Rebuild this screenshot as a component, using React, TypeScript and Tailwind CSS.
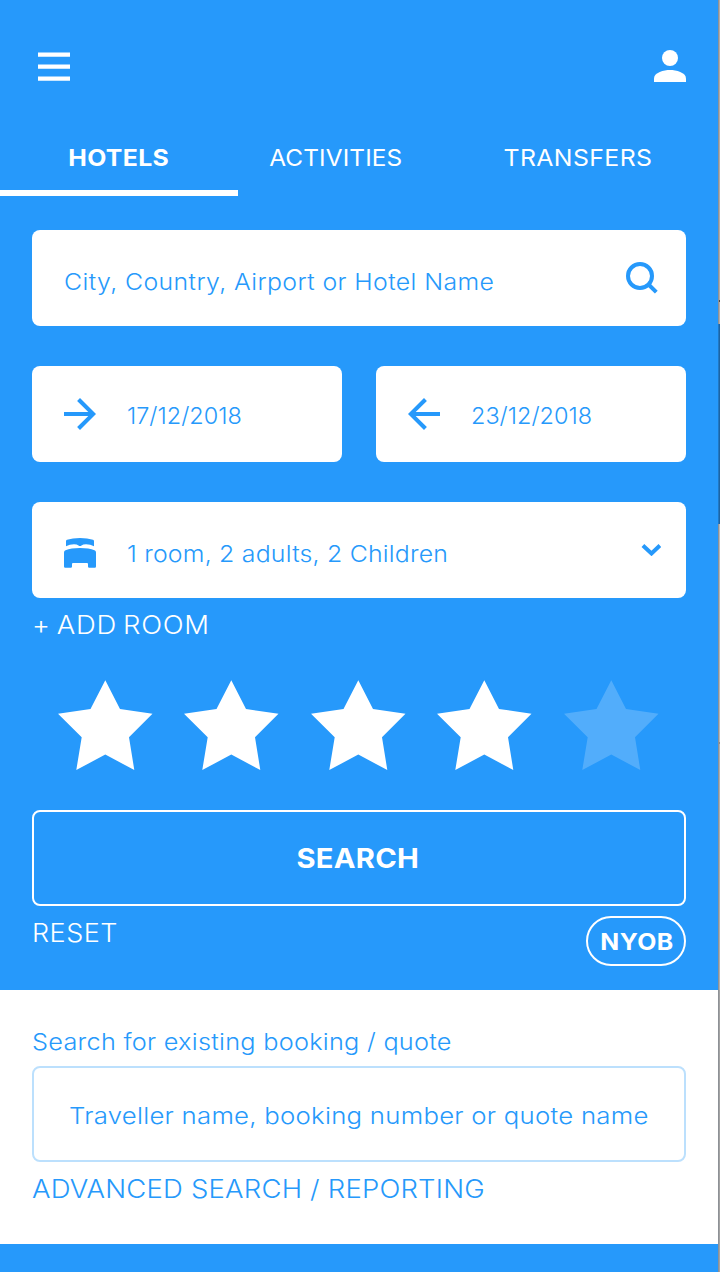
import type { ReactNode } from "react";

const tabs = [
  { label: "HOTELS", cell: "w-[238px] border-white font-bold", text: "scale-x-108 tracking-[0.3px]" },
  { label: "ACTIVITIES", cell: "w-[196px] border-transparent", text: "scale-x-106 tracking-[0.1px]" },
  { label: "TRANSFERS", cell: "flex-1 border-transparent pl-1", text: "scale-x-108 tracking-[0.37px]" },
];

function Field({ children, className }: { children: ReactNode; className: string }) {
  return <div className={`flex h-24 items-center rounded-lg bg-white ${className}`}>{children}</div>;
}

function ArrowRight({ className = "" }: { className?: string }) {
  return (
    <svg className={`size-8 shrink-0 ${className}`} viewBox="0 0 32 32" fill="currentColor">
      <path d="M16 0l-2.900 2.900L24.300 14H0v4h24.300L13.100 29.100 16 32l16-16z" />
    </svg>
  );
}

function Star({ className = "" }: { className?: string }) {
  return (
    <svg className={`h-[90px] w-[95px] ${className}`} viewBox="0 0 95 90" fill="currentColor">
      <path d="M47.300 0.300L62 29 94.500 33.800 71 57.200 76.300 90 47.300 74.600 18.300 90 23.700 57.200 0 33.800 32.500 29z" />
    </svg>
  );
}

export default function App() {
  return (
    <div className="flex h-[1272px] w-[720px] overflow-hidden bg-[#2699fb] font-['Inter',sans-serif] text-[23px] leading-8">
      <main className="flex w-[718px] shrink-0 flex-col bg-[#2699fb] text-[#2699fb]">
        <header className="flex h-[142px] shrink-0 items-start justify-between pt-[50px] pr-8 pl-[38px] text-white">
          <svg className="size-8" viewBox="0 0 32 32" fill="currentColor">
            <path d="M0 2.400h32v4.300H0zM0 14.400h32v4.300H0zM0 26.400h32v4.300H0z" />
          </svg>
          <svg className="size-8" viewBox="0 0 32 32" fill="currentColor">
            <circle cx="16" cy="8" r="8" />
            <path d="M16 20C10 20 0 22.500 0 28.400V32h32v-3.600C32 22.500 22 20 16 20z" />
          </svg>
        </header>

        <nav className="flex h-[54px] shrink-0 text-white">
          {tabs.map((t) => (
            <div key={t.label} className={`border-b-6 text-center ${t.cell}`}>
              <span className={`inline-block ${t.text}`}>{t.label}</span>
            </div>
          ))}
        </nav>

        <section className="flex flex-col px-8 pt-[34px] font-light">
          <Field className="justify-between pr-[28px] pl-8">
            <span className="origin-left scale-x-108 pt-2 tracking-[0.37px]">City, Country, Airport or Hotel Name</span>
            <svg className="size-8" viewBox="0 0 32 32" fill="none" stroke="currentColor" strokeWidth="4">
              <circle cx="14" cy="14" r="12" />
              <path d="M22.500 22.500l7.800 7.600" />
            </svg>
          </Field>

          <div className="mt-10 grid grid-cols-2 gap-[34px]">
            <Field className="gap-[31px] pl-8">
              <ArrowRight />
              <span className="origin-left scale-x-102 pt-1">17/12/2018</span>
            </Field>
            <Field className="gap-[31px] pl-8">
              <ArrowRight className="rotate-180" />
              <span className="origin-left scale-x-102 pt-1">23/12/2018</span>
            </Field>
          </div>

          <Field className="mt-10 pr-[25px] pl-8">
            <svg className="mt-[6px] h-[30px] w-8 shrink-0" viewBox="0 0 32 30" fill="currentColor">
              <path d="M2 3.200Q2 2.200 3 1.800Q8.500 0 16 0T29 1.800Q30 2.200 30 3.200V8.200Q26.500 6.200 22 6.200Q19 6.200 17.500 7.400Q16 8.600 14.500 7.400Q13 6.200 10 6.200Q5.500 6.200 2 8.200z" />
              <path d="M0 14.500Q0 12.800 1.500 12.300Q7 10 16 10T30.500 12.300Q32 12.800 32 14.500V28.500Q32 29.700 30.800 29.700H25.200Q24 29.700 24 28.500V26Q24 25 23 25H9Q8 25 8 26V28.500Q8 29.700 6.800 29.700H1.200Q0 29.700 0 28.500z" />
            </svg>
            <span className="ml-[31px] flex-1 origin-left scale-x-108 pt-2 tracking-[0.2px]">1 room, 2 adults, 2 Children</span>
            <svg className="h-3 w-5" viewBox="0 0 20 12" fill="none" stroke="currentColor" strokeWidth="4">
              <path d="M1.900 1.500L10.500 9.500l8.400-8" />
            </svg>
          </Field>

          <div className="mt-[11px] origin-left scale-x-110 text-[25px] leading-8 tracking-[0.6px] [word-spacing:-2px] text-white">
            + ADD ROOM
          </div>

          <div className="mt-[39px] flex justify-between pr-[27.500px] pl-[26px] text-white">
            <Star />
            <Star />
            <Star />
            <Star />
            <Star className="opacity-20" />
          </div>

          <button className="mt-10 flex h-24 items-center justify-center rounded-lg border-2 border-white pt-[2px] pr-[2px] text-[27px] leading-8 font-bold text-white">
            <span className="scale-x-108 tracking-[0.24px]">SEARCH</span>
          </button>

          <div className="mt-[10px] flex h-[74px] items-start justify-between text-white">
            <span className="origin-left scale-x-108 pt-px text-[25px] leading-8 tracking-[0.46px]">RESET</span>
            <span className="flex h-[50px] w-[100px] items-center justify-center rounded-full border-2 border-white pt-px pl-[2px] font-bold">
              <span className="scale-x-108 tracking-[0.4px]">NYOB</span>
            </span>
          </div>
        </section>

        <section className="flex h-[254px] shrink-0 flex-col bg-white px-8 pt-9 font-light">
          <div className="origin-left scale-x-110 tracking-[0.23px]">Search for existing booking / quote</div>
          <div className="mt-2 flex h-24 items-center rounded-lg border-2 border-[#bce0fd] pt-1 pl-[35px] whitespace-nowrap">
            <span className="origin-left scale-x-112 tracking-[0.22px]">Traveller name, booking number or quote name</span>
          </div>
          <div className="mt-[11px] origin-left scale-x-110 text-[25px] leading-8 tracking-[0.17px]">
            ADVANCED SEARCH / REPORTING
          </div>
        </section>
      </main>

      <div className="flex w-[2px] flex-col border-l border-[#8d9196] bg-[#a3a3a3]">
        <div className="h-[300px] bg-[#b3aca8]" />
        <div className="h-[2px] bg-[#4b4b4b]" />
        <div className="h-[22px] bg-[#b3aca8]" />
        <div className="-ml-px h-[200px] border-l border-[#2178c4] bg-[#1c64a5]" />
        <div className="h-[218px] bg-[#b8b8b8]" />
        <div className="h-[2px] bg-[#8a8a8a]" />
        <div className="h-[246px] bg-[#b0b0b0]" />
      </div>
    </div>
  );
}
